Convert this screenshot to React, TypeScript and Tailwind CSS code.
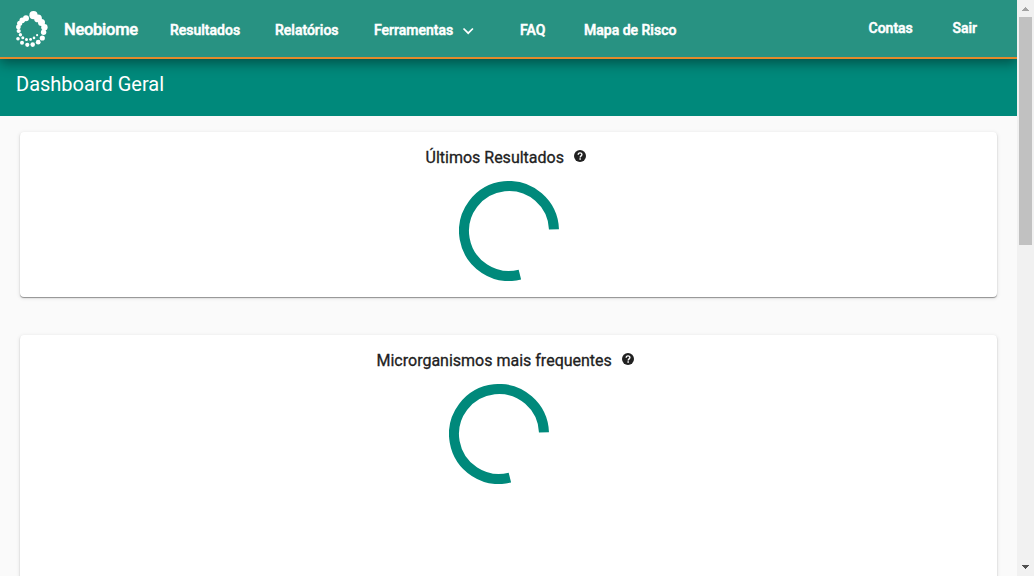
import React from 'react';

const dots: [number, number, number][] = [
  [33.5, 15.2, 4.1], [38, 18.4, 3.9], [41.5, 22.4, 3.5], [44.4, 27.2, 3.2], [43.6, 32.2, 2.7],
  [42.3, 38, 2.6], [38.2, 42.2, 2.4], [32.7, 44.6, 2.3], [27.3, 44.8, 2.1], [22, 42.7, 2],
  [18, 38.8, 1.8], [20.4, 34.7, 1.7], [22.8, 37.8, 1.5], [26.5, 39.4, 1.5], [30.6, 39.4, 1.4],
  [34, 37.9, 1.3], [37.1, 35.2, 1.1], [26, 18.3, 3], [22.3, 20.3, 2.8], [19.7, 23.3, 2.6],
  [18.4, 27, 2.4], [18.7, 31, 2.1],
];

function Logo() {
  return (
    <svg className="h-[40px] w-[40px] shrink-0" viewBox="12 9 40 40" fill="white">
      {dots.map(([x, y, r], i) => <circle key={i} cx={x} cy={y} r={r} />)}
    </svg>
  );
}

function Help() {
  return (
    <svg className="mb-1 ml-[10px] h-3 w-3" viewBox="0 0 12 12" fill="none">
      <circle cx="6" cy="6" r="6" fill="#212121" />
      <path d="M4.200 4.700C4.200 2.300 7.900 2.400 7.900 4.500 7.900 5.900 6.200 5.800 6.200 7.400" stroke="white" strokeWidth="1.400" />
      <path d="M5.400 8.200h1.500v1.500H5.400z" fill="white" />
    </svg>
  );
}

function Spinner() {
  return (
    <svg className="h-[100px] w-[100px]" viewBox="0 0 100 100" fill="none">
      <path d="M94.97 48.400A45 45 0 1 0 60.900 93.660" stroke="#00897b" strokeWidth="10" />
    </svg>
  );
}

function NavLink({ className, children }: { className: string; children: React.ReactNode }) {
  return <a className={`shrink-0 whitespace-nowrap ${className}`}>{children}</a>;
}

export default function App() {
  return (
    <div className="flex h-[576px] w-[1034px] overflow-hidden bg-[#fafafa] font-['Roboto',sans-serif] text-[#212121]">
      <div className="flex w-[1017px] flex-col overflow-hidden">
        <header className="z-10 flex h-[59px] shrink-0 border-b-2 border-[#e28a2b] bg-[#289282] pl-3 text-sm font-medium leading-5 text-white shadow-[0_4px_12px_rgba(0,0,0,0.42)] [-webkit-text-stroke:0.5px_white]">
          <div className="pt-[9px]"><Logo /></div>
          <NavLink className="ml-3 w-[106px] pt-5 text-[16.5px] tracking-[-0.27px]">Neobiome</NavLink>
          <NavLink className="w-[105px] pt-5">Resultados</NavLink>
          <NavLink className="w-[99px] pt-5">Relatórios</NavLink>
          <NavLink className="flex w-[146px] pt-5">
            <span className="w-[88px]">Ferramentas</span>
            <svg className="mt-[5px] h-3 w-3" viewBox="0 0 12 12" fill="none" stroke="white" strokeWidth="1.7">
              <path d="M1.500 3.500 6.200 8.200 10.900 3.500" />
            </svg>
          </NavLink>
          <NavLink className="w-[64px] pt-5">FAQ</NavLink>
          <NavLink className="pt-5">Mapa de Risco</NavLink>
          <NavLink className="ml-auto w-[84px] pt-[18px]">Contas</NavLink>
          <NavLink className="w-[64.5px] pt-[18px]">Sair</NavLink>
        </header>
        <div className="h-[57px] shrink-0 bg-[#00897b] pl-4 pt-[11px] text-xl leading-7 text-white">Dashboard Geral</div>
        <main className="flex flex-col gap-[38px] px-5 pt-4">
          <section className="flex h-[165px] shrink-0 flex-col items-center rounded bg-white pt-[14px] shadow-[0_1px_1px_rgba(0,0,0,0.38),0_1px_4px_rgba(0,0,0,0.12)]">
            <h2 className="flex h-6 w-[168px] items-center whitespace-nowrap pl-[1px] text-base font-normal [-webkit-text-stroke:0.3px_#212121]"><span className="w-[138px]">Últimos Resultados</span><Help /></h2>
            <div className="mt-[11px]"><Spinner /></div>
          </section>
          <section className="flex h-[300px] shrink-0 flex-col items-center rounded bg-white pt-[14px] shadow-[0_1px_1px_rgba(0,0,0,0.38),0_1px_4px_rgba(0,0,0,0.12)]">
            <h2 className="flex h-6 w-[264px] items-center whitespace-nowrap text-base font-normal [-webkit-text-stroke:0.3px_#212121]"><span className="w-[235px]">Microrganismos mais frequentes</span><Help /></h2>
            <div className="mr-5 mt-[11px]"><Spinner /></div>
          </section>
        </main>
      </div>
      <aside className="flex w-[17px] shrink-0 flex-col items-center bg-[#f1f1f1]">
        <svg className="h-[17px] w-[17px] shrink-0" viewBox="0 0 17 17" shapeRendering="crispEdges"><path d="M5 11 8.500 7 12 11z" fill="#a3a3a3" /></svg>
        <div className="h-[228px] w-[13px] bg-[#c1c1c1]" />
        <svg className="mt-auto h-[17px] w-[17px] shrink-0" viewBox="0 0 17 17" shapeRendering="crispEdges"><path d="M5 6H12L8.500 10z" fill="#505050" /></svg>
      </aside>
    </div>
  );
}
